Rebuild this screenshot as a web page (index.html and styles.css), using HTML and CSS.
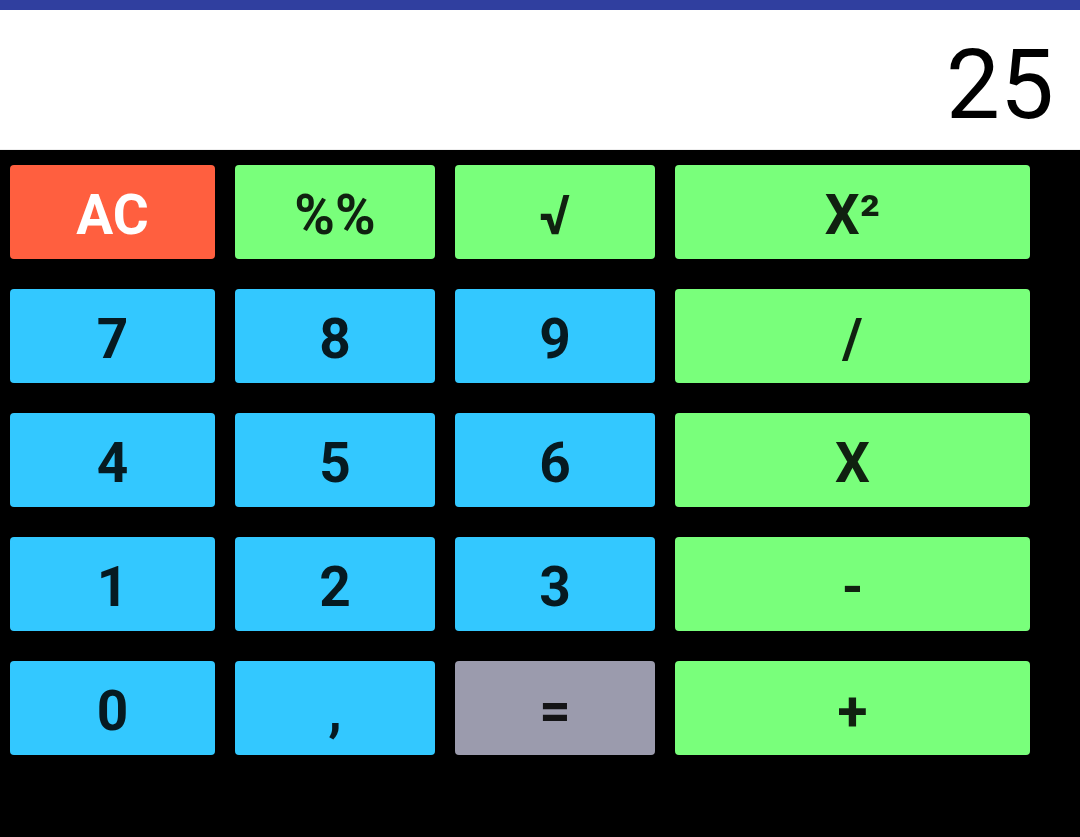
FILE: index.html
```html
<!DOCTYPE html>
<html>
<head>
<meta charset="utf-8">
<link rel="stylesheet" href="styles.css">
</head>
<body>
<div class="topbar"></div>
<div class="display"><span class="result">25</span></div>
<div class="keys">
  <div class="key red">AC</div>
  <div class="key green">%%</div>
  <div class="key green">√</div>
  <div class="key green">X²</div>

  <div class="key blue">7</div>
  <div class="key blue">8</div>
  <div class="key blue">9</div>
  <div class="key green">/</div>

  <div class="key blue">4</div>
  <div class="key blue">5</div>
  <div class="key blue">6</div>
  <div class="key green">X</div>

  <div class="key blue">1</div>
  <div class="key blue">2</div>
  <div class="key blue">3</div>
  <div class="key green">-</div>

  <div class="key blue">0</div>
  <div class="key blue">,</div>
  <div class="key gray">=</div>
  <div class="key green">+</div>
</div>
</body>
</html>
```
FILE: styles.css
```css
html, body {
  margin: 0;
  padding: 0;
  background: #000;
  height: 100%;
  font-family: Roboto, "Liberation Sans", sans-serif;
}
.topbar {
  height: 10px;
  background: #303f9f;
}
.display {
  height: 129px;
  padding-top: 10px;
  background: #fff;
  border-bottom: 1px solid #eeeeee;
  display: flex;
  align-items: center;
  justify-content: flex-end;
  padding-right: 26px;
}
.result {
  font-size: 96px;
  font-weight: 400;
  color: #000;
  line-height: 1;
}
.keys {
  display: grid;
  grid-template-columns: 205px 200px 200px 355px;
  grid-auto-rows: 94px;
  column-gap: 20px;
  row-gap: 30px;
  padding: 15px 0 0 10px;
}
.key {
  display: flex;
  align-items: center;
  justify-content: center;
  box-sizing: border-box;
  padding-top: 6px;
  border-radius: 4px;
  font-size: 55px;
  font-weight: 700;
  color: rgba(0, 0, 0, 0.87);
}
.red {
  background: #ff5f3f;
  color: #fff;
}
.green {
  background: #79ff7b;
}
.blue {
  background: #33c8ff;
}
.gray {
  background: #9b9bad;
}
```
